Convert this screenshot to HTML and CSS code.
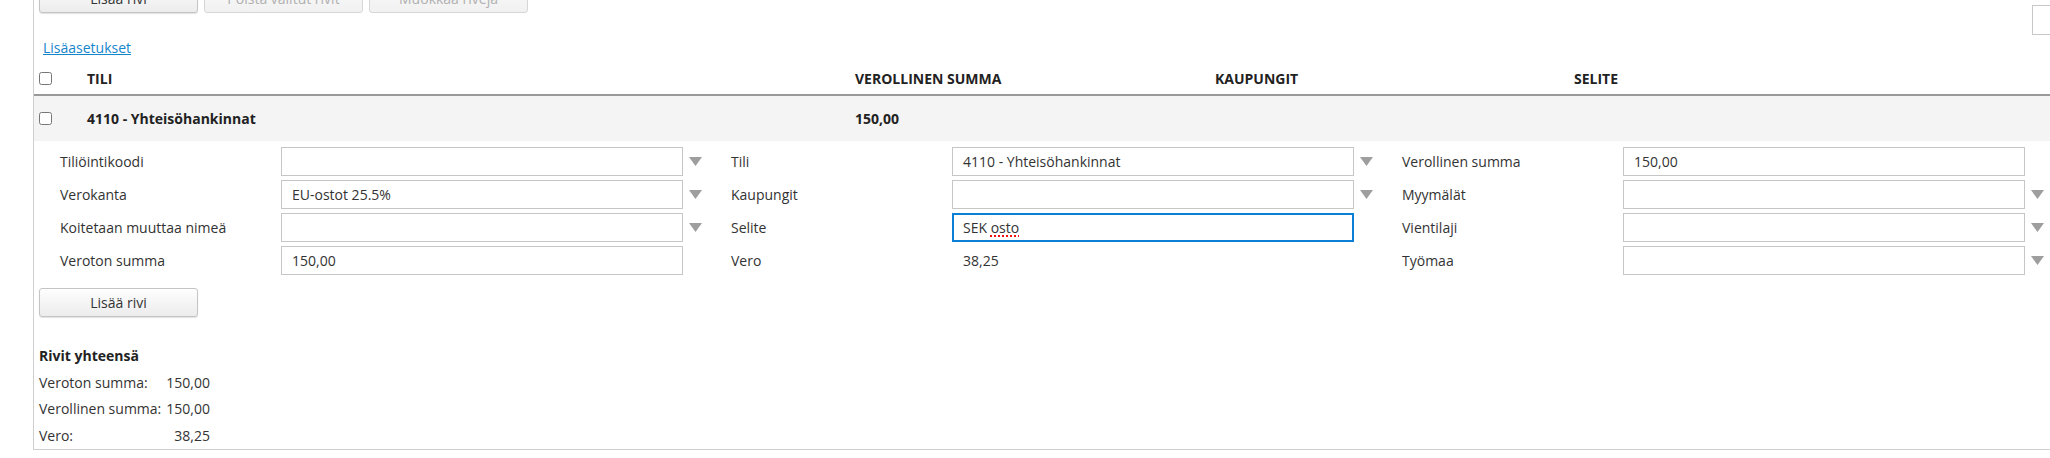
FILE: index.html
```html
<!DOCTYPE html>
<html lang="fi">
<head>
<meta charset="utf-8">
<title>Rivit</title>
<link rel="stylesheet" href="styles.css">
</head>
<body>
<div class="page">
  <div class="toolbar">
    <button class="btn">Lisää rivi</button>
    <button class="btn btn-disabled">Poista valitut rivit</button>
    <button class="btn btn-disabled">Muokkaa rivejä</button>
    <div class="corner-box"></div>
  </div>

  <a class="more-link" href="#">Lisäasetukset</a>

  <div class="grid-table">
    <div class="gt-head">
      <div class="gt-check"><input type="checkbox"></div>
      <div class="gt-cell">TILI</div>
      <div class="gt-cell">VEROLLINEN SUMMA</div>
      <div class="gt-cell">KAUPUNGIT</div>
      <div class="gt-cell">SELITE</div>
    </div>
    <div class="gt-row">
      <div class="gt-check"><input type="checkbox"></div>
      <div class="gt-cell">4110 - Yhteisöhankinnat</div>
      <div class="gt-cell">150,00</div>
      <div class="gt-cell"></div>
      <div class="gt-cell"></div>
    </div>
  </div>

  <div class="form">
    <div class="f-label">Tiliöintikoodi</div>
    <div class="f-field"></div>
    <div class="f-arrow"><svg width="13" height="9" viewBox="0 0 13 9"><path d="M0 0H13L6.5 9Z"/></svg></div>
    <div class="f-label">Tili</div>
    <div class="f-field">4110 - Yhteisöhankinnat</div>
    <div class="f-arrow"><svg width="13" height="9" viewBox="0 0 13 9"><path d="M0 0H13L6.5 9Z"/></svg></div>
    <div class="f-label">Verollinen summa</div>
    <div class="f-field">150,00</div>
    <div class="f-arrow"></div>

    <div class="f-label">Verokanta</div>
    <div class="f-field">EU-ostot 25.5%</div>
    <div class="f-arrow"><svg width="13" height="9" viewBox="0 0 13 9"><path d="M0 0H13L6.5 9Z"/></svg></div>
    <div class="f-label">Kaupungit</div>
    <div class="f-field"></div>
    <div class="f-arrow"><svg width="13" height="9" viewBox="0 0 13 9"><path d="M0 0H13L6.5 9Z"/></svg></div>
    <div class="f-label">Myymälät</div>
    <div class="f-field"></div>
    <div class="f-arrow"><svg width="13" height="9" viewBox="0 0 13 9"><path d="M0 0H13L6.5 9Z"/></svg></div>

    <div class="f-label">Koitetaan muuttaa nimeä</div>
    <div class="f-field"></div>
    <div class="f-arrow"><svg width="13" height="9" viewBox="0 0 13 9"><path d="M0 0H13L6.5 9Z"/></svg></div>
    <div class="f-label">Selite</div>
    <div class="f-field f-focus">SEK <span class="misspelled">osto</span></div>
    <div class="f-arrow"></div>
    <div class="f-label">Vientilaji</div>
    <div class="f-field"></div>
    <div class="f-arrow"><svg width="13" height="9" viewBox="0 0 13 9"><path d="M0 0H13L6.5 9Z"/></svg></div>

    <div class="f-label">Veroton summa</div>
    <div class="f-field">150,00</div>
    <div class="f-arrow"></div>
    <div class="f-label">Vero</div>
    <div class="f-value">38,25</div>
    <div class="f-arrow"></div>
    <div class="f-label">Työmaa</div>
    <div class="f-field"></div>
    <div class="f-arrow"><svg width="13" height="9" viewBox="0 0 13 9"><path d="M0 0H13L6.5 9Z"/></svg></div>
  </div>

  <button class="btn btn-add">Lisää rivi</button>

  <div class="summary">
    <div class="summary-title">Rivit yhteensä</div>
    <div class="summary-grid">
      <div class="s-label">Veroton summa:</div>
      <div class="s-value">150,00</div>
      <div class="s-label">Verollinen summa:</div>
      <div class="s-value">150,00</div>
      <div class="s-label">Vero:</div>
      <div class="s-value">38,25</div>
    </div>
  </div>
</div>
</body>
</html>
```

FILE: styles.css
```css
html, body {
  margin: 0;
  padding: 0;
  overflow: hidden;
  background: #fff;
}

body {
  font-family: "Open Sans", "DejaVu Sans", sans-serif;
  font-size: 14px;
  color: #333;
}

.page {
  margin-left: 33px;
  border-left: 1px solid #cfcfcf;
  border-bottom: 1px solid #cfcfcf;
}

.toolbar {
  display: flex;
  align-items: flex-start;
  gap: 6px;
  height: 29px;
  margin-top: -16px;
  padding-left: 5px;
}

.btn {
  box-sizing: border-box;
  width: 159px;
  height: 29px;
  padding: 0;
  font-family: "Open Sans", "DejaVu Sans", sans-serif;
  font-size: 14px;
  color: #333;
  background: linear-gradient(#fefefe, #ececec);
  border: 1px solid #c4c4c4;
  border-radius: 3px;
  box-shadow: 0 1px 1px rgba(0, 0, 0, 0.12);
}

.btn-disabled {
  color: #b0b0b0;
  background: linear-gradient(#fafafa, #f1f1f1);
  border-color: #d6d6d6;
  box-shadow: none;
}

.corner-box {
  box-sizing: border-box;
  width: 30px;
  height: 30px;
  margin-left: auto;
  margin-right: -12px;
  margin-top: 21px;
  border: 1px solid #c8c8c8;
  flex-shrink: 0;
}

.more-link {
  display: inline-block;
  margin-top: 25px;
  margin-left: 9px;
  line-height: 20px;
  color: #1585cc;
  text-decoration: underline;
}

.grid-table {
  margin-top: 5px;
}

.gt-head,
.gt-row {
  display: grid;
  grid-template-columns: 53px 768px 360px 359px 1fr;
  align-items: center;
}

.gt-head {
  height: 31px;
  border-bottom: 2px solid #999;
  font-weight: 700;
  color: #222;
}

.gt-row {
  height: 45px;
  background: #f4f4f4;
  font-weight: 700;
  color: #222;
}

.gt-check {
  padding-left: 5px;
  display: flex;
  align-items: center;
}

.gt-check input {
  margin: 0;
  width: 13px;
  height: 13px;
}

.form {
  display: grid;
  grid-template-columns: 221px 402px 48px 221px 402px 48px 221px 402px 48px;
  grid-auto-rows: 29px;
  row-gap: 4px;
  padding-top: 6px;
  padding-left: 26px;
  align-items: center;
}

.f-label {
  line-height: 20px;
  white-space: nowrap;
}

.f-field {
  box-sizing: border-box;
  height: 29px;
  border: 1px solid #c6c6c6;
  padding: 0 10px;
  line-height: 27px;
  white-space: nowrap;
  overflow: hidden;
  background: #fff;
}

.f-focus {
  border: 2px solid #0a7fd6;
  padding: 0 9px;
  line-height: 25px;
  overflow: visible;
}

.misspelled {
  text-decoration: underline dotted #f01010;
  text-decoration-thickness: 2px;
  text-underline-offset: 2px;
}

.f-value {
  padding-left: 11px;
  line-height: 20px;
}

.f-arrow {
  padding-left: 6px;
  display: flex;
  align-items: center;
  height: 29px;
}

.f-arrow svg {
  fill: #9e9e9e;
}

.btn-add {
  display: block;
  margin-top: 13px;
  margin-left: 5px;
}

.summary {
  margin-top: 29px;
  padding-left: 5px;
}

.summary-title {
  font-weight: 700;
  color: #222;
  line-height: 20px;
  margin-bottom: 3px;
}

.summary-grid {
  display: inline-grid;
  grid-template-columns: auto auto;
  column-gap: 5px;
  grid-auto-rows: 26.5px;
  align-items: center;
}

.s-value {
  text-align: right;
}
```
